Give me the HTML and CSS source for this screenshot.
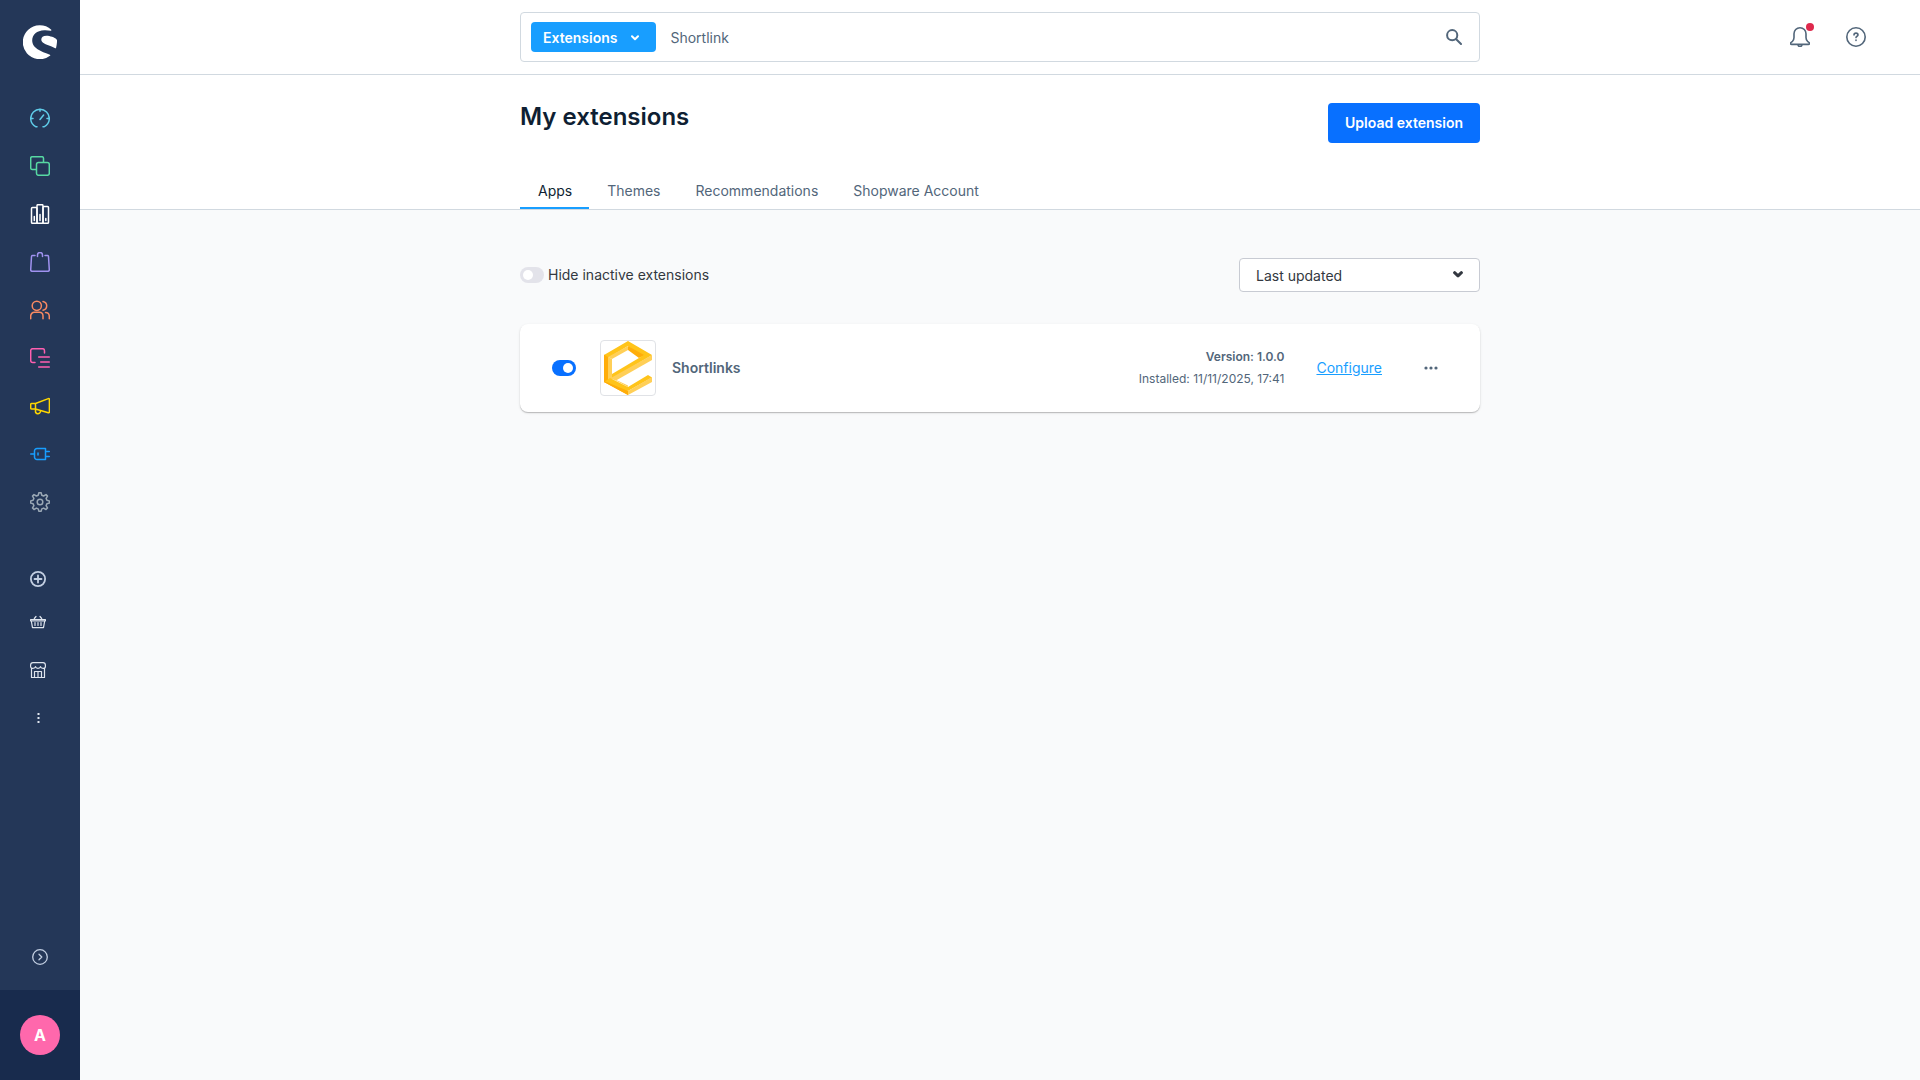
FILE: index.html
```html
<!DOCTYPE html>
<html lang="en">
  <head>
    <meta charset="UTF-8" />
    <meta name="viewport" content="width=device-width, initial-scale=1.0" />
    <title>My extensions</title>
    <link rel="stylesheet" href="styles.css">
  </head>
  <body>
    <aside class="sidebar">
      <a href="#" class="logo" aria-label="Home">
        <svg width="34" height="34" viewBox="0 0 34 34" fill="#fff">
          <path d="M28.3 4.7A17 17 0 1 0 27 30.8c.5-.4.4-.7-.1-1C21.500 27.300 9.200 24.500 9.200 15.500c0-5.500 4.600-10 12-10.200 2.300-.1 4.500.1 6.600.5.500.1.800-.7.500-1.100z" />
          <path d="M33.400 14.200c-1.500-1.700-6.500-3.400-10-3.400-3.300 0-5.100 1.500-5.100 3.700 0 2.700 2.700 4 6.300 5.500 2.800 1.100 5.400 2 7.600 3.200.5.300.800.1.9-.4.500-2.500 1.100-6 .9-7.700-.1-.400-.3-.6-.6-.9z" />
        </svg>
      </a>

      <nav class="main-nav">
        <a href="#" class="nav-dashboard" aria-label="Dashboard">
          <svg width="20" height="20" viewBox="0 0 20 20">
            <path d="M7 18.700l-1 .1c-3-1.500-5.300-4.800-5.300-8.300a9.300 9.300 0 0 1 18.600 0c0 3.500-2.300 6.800-5.300 8.300l-1-.1M10 1v2.200M1 10.500h2M17 10.500h2M10 11.500l3.600-4.500" />
          </svg>
        </a>
        <a href="#" class="nav-catalogues" aria-label="Catalogues">
          <svg width="20" height="20" viewBox="0 0 20 20">
            <rect x="6.500" y="6.500" width="12.800" height="12.800" rx="2" />
            <path d="M6 13.500H2.200A1.500 1.500 0 0 1 .7 12V2.200A1.500 1.500 0 0 1 2.200.7H12a1.500 1.500 0 0 1 1.500 1.500V6" />
          </svg>
        </a>
        <a href="#" class="nav-orders" aria-label="Orders">
          <svg width="20" height="20" viewBox="0 0 20 20">
            <rect x="1.500" y="3.500" width="5.500" height="15.800" rx="1" />
            <rect x="7" y=".7" width="6" height="18.600" rx="1" />
            <rect x="13" y="2.500" width="5.500" height="16.800" rx="1" />
            <path d="M4.300 12.500v4M10 10.500v6M15.800 14.500v2" />
          </svg>
        </a>
        <a href="#" class="nav-products" aria-label="Products">
          <svg width="20" height="20" viewBox="0 0 20 20">
            <path d="M5 3.500H2.500a1 1 0 0 0-1 1L.7 17.800a1.500 1.500 0 0 0 1.500 1.500h15.600a1.500 1.500 0 0 0 1.500-1.500L18.500 4.500a1 1 0 0 0-1-1H15M7.500 4.500V3a2.500 2.500 0 0 1 5 0v1.500" />
          </svg>
        </a>
        <a href="#" class="nav-customers" aria-label="Customers">
          <svg width="20" height="20" viewBox="0 0 20 20">
            <circle cx="6.800" cy="5.800" r="4.600" />
            <path d="M.7 18.700V16a3.700 3.700 0 0 1 3.700-3.700h5A3.700 3.700 0 0 1 13 16v2.700M13 1.400c2 .4 3.700 2.200 3.700 4.400S15 9.800 13 10.200M15.500 12.600c2.300 0 3.800 1.700 3.800 4v2.100" />
          </svg>
        </a>
        <a href="#" class="nav-content" aria-label="Content">
          <svg width="20" height="20" viewBox="0 0 20 20">
            <path d="M5 14.500H2.700a2 2 0 0 1-2-2V2.700a2 2 0 0 1 2-2h9.800a2 2 0 0 1 2 2V5M8.700 9h10.600M10.700 14h8.600M8.700 19h10.600" />
          </svg>
        </a>
        <a href="#" class="nav-marketing" aria-label="Marketing">
          <svg width="20" height="20" viewBox="0 0 20 20">
            <path d="M5.500 7.500L18.300 2.600a.8.8 0 0 1 1.100.8v12.700a.8.8 0 0 1-1.100.7L5.500 13zM5.500 7.500H1.700a1 1 0 0 0-1 1V12a1 1 0 0 0 1 1h3.800M5.500 13v2a2.300 2.300 0 0 0 4.900.5" />
          </svg>
        </a>
        <a href="#" class="nav-extensions" aria-label="Extensions">
          <svg width="20" height="20" viewBox="0 0 20 20">
            <path d="M.7 10h3.800M7 4.500h8.500v11H7A2.500 2.500 0 0 1 4.500 13V7A2.500 2.500 0 0 1 7 4.500zM15.500 7.500h3.800M15.500 12.500h3.800M8 9v2" />
          </svg>
        </a>
        <a href="#" class="nav-settings" aria-label="Settings">
          <svg width="20" height="20" viewBox="0 0 20 20">
            <circle cx="10" cy="10" r="2.800" />
            <path d="M8.900.7h2.200l.7 2.500 1.800.8 2.400-1.400 1.500 1.500L16.100 6.400l.8 1.800 2.400.7v2.200l-2.400.7-.8 1.800 1.400 2.400-1.500 1.500-2.400-1.400-1.800.8-.7 2.400H8.900l-.7-2.400-1.800-.8L4 17.500 2.500 16l1.400-2.400-.8-1.800-2.400-.7V8.900l2.400-.7.8-1.800L2.500 4.100 4 2.600 6.400 4l1.800-.8z" />
          </svg>
        </a>
      </nav>

      <nav class="quick-nav">
        <a href="#" class="quick-add" aria-label="Add sales channel">
          <svg width="16" height="16" viewBox="0 0 16 16">
            <circle cx="8" cy="8" r="7.100" />
            <path d="M8 4.500v7M4.500 8h7" />
          </svg>
        </a>
        <a href="#" aria-label="Storefront basket">
          <svg width="16" height="16" viewBox="0 0 16 16">
            <path d="M.6 5.500h14.800v1.300H.6zM1.300 7l1.200 6.700h11L14.700 7M4.300 4.500L6 2.500M11.700 4.500L10 2.500M5 8.500v3M8 8.500v3M11 8.500v3" />
          </svg>
        </a>
        <a href="#" aria-label="Store">
          <svg width="16" height="16" viewBox="0 0 16 16">
            <path d="M1.500 6.500v9h13v-9M.6 4.500V3A2.500 2.500 0 0 1 3 .6h10A2.500 2.500 0 0 1 15.400 3v1.500c0 2.600-4.400 2.600-4.900 0-.5 2.600-4.500 2.600-5 0-.5 2.600-4.900 2.600-4.900 0zM4.500 15.500v-6h7v6M8 9.500v6" />
          </svg>
        </a>
        <a href="#" class="quick-more" aria-label="More">
          <svg width="16" height="16" viewBox="0 0 16 16">
            <path d="M7.500 3h2v2h-2zM7.500 7h2v2h-2zM7.500 11h2v2h-2z" />
          </svg>
        </a>
      </nav>

      <button type="button" class="expand" aria-label="Expand menu">
        <svg width="16" height="16" viewBox="0 0 16 16">
          <circle cx="8" cy="8" r="7.300" />
          <path d="M7 5.200L9.800 8 7 10.800" />
        </svg>
      </button>
      <div class="user">
        <button type="button" class="avatar">A</button>
      </div>
    </aside>

    <div class="page">
      <header class="topbar">
        <form class="search">
          <button type="button" class="search-type">
            Extensions
            <svg width="8" height="6" viewBox="0 0 8 6">
              <path d="M1 1.200l3 3 3-3" />
            </svg>
          </button>
          <input type="text" value="Shortlink" aria-label="Search" />
          <button type="submit" class="search-submit" aria-label="Search">
            <svg width="16" height="16" viewBox="0 0 16 16">
              <circle cx="6.200" cy="6.200" r="5.100" />
              <path d="M10.200 10.200l4.800 4.800" />
            </svg>
          </button>
        </form>
        <div class="actions">
          <button type="button" class="bell" aria-label="Notifications">
            <svg width="20" height="20" viewBox="0 0 20 20">
              <path d="M10 .8c-3.500 0-6 2.700-6 6v3.700c0 1.600-.5 2.700-1.500 3.800L1 15.500c-.9 1-.4 1.900.6 1.900h16.800c1 0 1.500-.9.600-1.900l-1.500-1.200c-1-1.100-1.500-2.200-1.500-3.800V6.800c0-3.300-2.500-6-6-6zM8 17.500a2 2 0 0 0 4 0" />
            </svg>
            <span class="badge"></span>
          </button>
          <button type="button" aria-label="Help">
            <svg width="20" height="20" viewBox="0 0 20 20">
              <circle cx="10" cy="10" r="9.200" />
              <path d="M8 8c0-1.200.9-1.900 2-1.900s2 .7 2 1.800c0 1.400-2 1.300-2 2.700M10 13v.4" />
            </svg>
          </button>
        </div>
      </header>

      <section class="page-head">
        <div class="container">
          <div class="title-row">
            <h1>My extensions</h1>
            <button type="button" class="upload">Upload extension</button>
          </div>
          <nav class="tabs">
            <a href="#" class="active">Apps</a>
            <a href="#">Themes</a>
            <a href="#">Recommendations</a>
            <a href="#">Shopware Account</a>
          </nav>
        </div>
      </section>

      <main class="container">
        <div class="filters">
          <div class="filter-inactive">
            <input type="checkbox" class="switch" id="hideInactive" />
            <label for="hideInactive">Hide inactive extensions</label>
          </div>
          <div class="select-wrap">
            <select aria-label="Sort by">
              <option>Last updated</option>
              <option>Name</option>
            </select>
            <svg width="10" height="7" viewBox="0 0 10 7">
              <path d="M1.600 1.700L5 4.900l3.400-3.200" />
            </svg>
          </div>
        </div>

        <article class="card">
          <input type="checkbox" class="switch" aria-label="Shortlinks active" checked />
          <div class="app-icon">
            <svg width="54" height="54" viewBox="0 0 54 54">
              <path fill="#ffc41a" d="M3 14L27 0l24 14-8 4-16-13L7 17z" />
              <path fill="#ffad0a" d="M3 13.500l4 2.500v22l20 12v4L3 41z" />
              <path fill="#ffcf57" d="M7 16l4 2v20l-4 3z" />
              <path fill="#ffcf57" d="M7 16L27 5v4L11 18z" />
              <path fill="#ffad0a" d="M27 5l16 9-5 3-11-8z" />
              <path fill="#ffc41a" d="M11 33l32-19 8 0L11 38z" />
              <path fill="#ffcf57" d="M9 37.500L51 14v5L15 39.500z" />
              <path fill="#ffc41a" d="M3 41l6-4 18 9 20-12 4 2.500L27 50z" />
              <path fill="#ffad0a" d="M3 40l24 10v4L3 41z" />
              <path fill="#ffcf57" d="M27 50l24-14v5L27 54zM11 37l4 2.500L27 46v-1.500z" />
            </svg>
          </div>
          <h2>Shortlinks</h2>
          <div class="meta">
            <strong>Version: 1.0.0</strong>
            <span>Installed: 11/11/2025, 17:41</span>
          </div>
          <a href="#" class="configure">Configure</a>
          <button type="button" class="more" aria-label="More actions">
            <svg width="14" height="4" viewBox="0 0 14 4">
              <circle cx="2" cy="2" r="1.600" />
              <circle cx="7" cy="2" r="1.600" />
              <circle cx="12" cy="2" r="1.600" />
            </svg>
          </button>
        </article>
      </main>
    </div>
  </body>
</html>
```
FILE: styles.css
```css
* {
  box-sizing: border-box;
}
body {
  margin: 0;
  min-height: 100vh;
  display: flex;
  font-family: Inter, sans-serif;
  font-size: 14px;
  line-height: 20px;
  color: #52667a;
  background: #f9fafb;
}
button {
  padding: 0;
  border: none;
  background: none;
  color: inherit;
  font: inherit;
  cursor: pointer;
}
a {
  text-decoration: none;
}
svg {
  display: block;
  fill: none;
  stroke: currentColor;
  stroke-linecap: round;
  stroke-linejoin: round;
}

/* sidebar */
.sidebar {
  width: 80px;
  flex-shrink: 0;
  display: flex;
  flex-direction: column;
  background: #243758;
}
.logo {
  padding: 25px 0 35px;
  display: flex;
  justify-content: center;
}
.logo svg {
  fill: #fff;
  stroke: none;
}
.main-nav a {
  height: 48px;
  display: flex;
  align-items: center;
  justify-content: center;
}
.nav-dashboard {
  color: #5fcbe8;
}
.nav-catalogues {
  color: #57d9a3;
}
.nav-orders {
  color: #fff;
}
.nav-products {
  color: #a092f0;
}
.nav-customers {
  color: #f88962;
}
.nav-content {
  color: #ff5fb0;
}
.nav-marketing {
  color: #ffd700;
}
.nav-extensions {
  color: #189eff;
}
.nav-settings {
  color: #9aa8b5;
}
.main-nav svg {
  stroke-width: 1.5;
}
.quick-nav {
  padding: 34px 0 0 30px;
}
.quick-nav a {
  height: 48px;
  display: flex;
  align-items: center;
  color: #dfe5ee;
}
.quick-nav svg {
  stroke-width: 1.2;
}
.quick-nav .quick-add {
  height: 38px;
  color: #c3cfe2;
}
.quick-nav .quick-add svg {
  stroke-width: 1.8;
}
.quick-more svg {
  fill: currentColor;
  stroke: none;
}
.expand {
  height: 66px;
  margin-top: auto;
  display: flex;
  align-items: center;
  justify-content: center;
  color: #c3cfe2;
}
.expand svg {
  stroke-width: 1.3;
}
.user {
  height: 90px;
  display: flex;
  align-items: center;
  justify-content: center;
  background: #182b4d;
}
.avatar {
  width: 40px;
  height: 40px;
  border-radius: 50%;
  background: #ff68ac;
  color: #fff;
  font-size: 16px;
  font-weight: 700;
}

/* top bar */
.page {
  flex: 1;
  min-width: 0;
}
.topbar {
  height: 75px;
  display: grid;
  grid-template-columns: 1fr minmax(0, 960px) 1fr;
  align-items: center;
  background: #fff;
  border-bottom: 1px solid #d1d9e0;
}
.search {
  grid-column: 2;
  height: 50px;
  padding: 0 17px 0 10px;
  display: flex;
  align-items: center;
  border: 1px solid #d1d9e0;
  border-radius: 4px;
}
.search-type {
  height: 30px;
  padding: 1px 17px 0 12px;
  display: flex;
  align-items: center;
  gap: 14px;
  border-radius: 4px;
  background: #189eff;
  color: #fff;
  font-weight: 600;
}
.search-type svg {
  stroke-width: 2;
}
.search input {
  flex: 1;
  min-width: 0;
  padding: 2px 14px 0;
  border: none;
  outline: none;
  background: none;
  color: inherit;
  font: inherit;
}
.search-submit svg {
  stroke-width: 2;
}
.actions {
  padding-right: 54px;
  display: flex;
  justify-content: flex-end;
  gap: 36px;
}
.actions svg {
  stroke-width: 1.6;
}
.bell {
  position: relative;
}
.badge {
  position: absolute;
  top: -4px;
  right: -4px;
  width: 8px;
  height: 8px;
  border-radius: 50%;
  background: #de294c;
}

/* page head */
.container {
  max-width: 960px;
  margin: 0 auto;
}
.page-head {
  background: #fff;
  border-bottom: 1px solid #d1d9e0;
}
.title-row {
  padding: 28px 0;
  display: flex;
  justify-content: space-between;
}
h1 {
  margin: 0;
  color: #0f1f33;
  font-size: 24px;
  line-height: 28px;
  font-weight: 600;
}
.upload {
  height: 40px;
  padding: 0 17px;
  border-radius: 4px;
  background: #0870ff;
  color: #fff;
  font-weight: 600;
}
.tabs {
  display: flex;
}
.tabs a {
  height: 38px;
  padding: 10px 17px 0 18px;
  color: #52667a;
}
.tabs .active {
  color: #0f1f33;
  border-bottom: 2px solid #189eff;
}

/* list */
.filters {
  padding: 48px 0 32px;
  display: flex;
  align-items: center;
  justify-content: space-between;
}
.filter-inactive {
  display: flex;
  align-items: center;
  gap: 4px;
  color: #333840;
}
.switch {
  appearance: none;
  width: 24px;
  height: 16px;
  margin: 0;
  padding: 3px;
  display: flex;
  border-radius: 8px;
  background: #e3e3ea;
  cursor: pointer;
}
.switch::before {
  content: "";
  width: 10px;
  height: 10px;
  border-radius: 50%;
  background: #fff;
}
.switch:checked {
  justify-content: flex-end;
  background: #0870ff;
}
.select-wrap {
  position: relative;
  width: 241px;
  color: #333840;
}
.select-wrap select {
  appearance: none;
  width: 100%;
  height: 34px;
  padding: 2px 32px 0 16px;
  border: 1px solid #c8cbd3;
  border-radius: 4px;
  background: #fff;
  color: inherit;
  font: inherit;
}
.select-wrap svg {
  position: absolute;
  top: 13px;
  right: 17px;
  stroke-width: 3;
  pointer-events: none;
}
.card {
  padding: 16px 32px;
  display: flex;
  align-items: center;
  border-radius: 8px;
  background: #fff;
  box-shadow: 0 1px 1px rgba(0, 0, 0, 0.2), 0 1px 3px rgba(0, 0, 0, 0.1);
}
.app-icon {
  margin: 0 16px 0 24px;
  border: 1px solid #e0e2e6;
  border-radius: 4px;
}
.app-icon path {
  stroke: none;
}
h2 {
  margin: 0;
  font-size: 14px;
  font-weight: 600;
}
.meta {
  margin-left: auto;
  display: flex;
  flex-direction: column;
  font-size: 12px;
  line-height: 22px;
  text-align: right;
}
.meta strong {
  font-weight: 600;
}
.configure {
  margin: 0 32px;
  color: #189eff;
  text-decoration: underline;
}
.more {
  padding: 8px 10px;
}
.more circle {
  fill: currentColor;
  stroke: none;
}
```
